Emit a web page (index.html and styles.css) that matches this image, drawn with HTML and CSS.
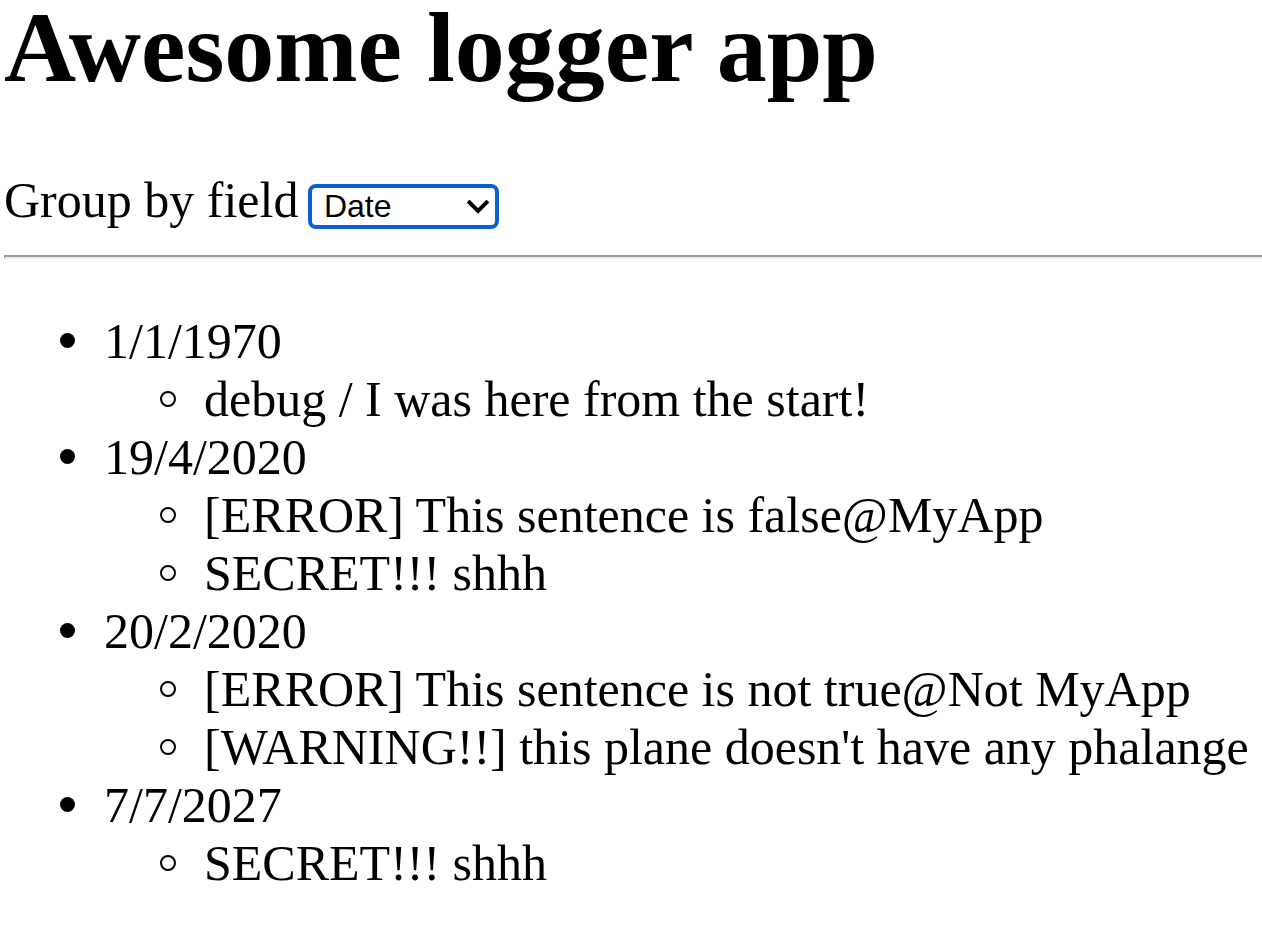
FILE: index.html
```html
<!DOCTYPE html>
<html lang="en">
<head>
<meta charset="utf-8">
<title>Awesome logger app</title>
<link rel="stylesheet" href="styles.css">
</head>
<body>
<h1 class="title">Awesome logger app</h1>
<div class="group-row">
  <label for="group" class="group-label">Group by field</label>
  <span class="select-wrap">
    <select id="group" class="group-select">
      <option>Date</option>
      <option>Level</option>
      <option>Source</option>
    </select>
    <svg class="chevron" width="22" height="14" viewBox="0 0 22 14" aria-hidden="true"><path d="M2.5 2.5 L11 11 L19.5 2.5" fill="none" stroke="#000" stroke-width="4" stroke-linecap="square" stroke-linejoin="miter"/></svg>
  </span>
</div>
<div class="rule"></div>
<ul class="groups">
  <li>1/1/1970
    <ul class="entries">
      <li>debug / I was here from the start!</li>
    </ul>
  </li>
  <li>19/4/2020
    <ul class="entries">
      <li>[ERROR] This sentence is false@MyApp</li>
      <li>SECRET!!! shhh</li>
    </ul>
  </li>
  <li>20/2/2020
    <ul class="entries">
      <li>[ERROR] This sentence is not true@Not MyApp</li>
      <li>[WARNING!!] this plane doesn't have any phalange</li>
    </ul>
  </li>
  <li>7/7/2027
    <ul class="entries">
      <li>SECRET!!! shhh</li>
    </ul>
  </li>
</ul>
</body>
</html>
```

FILE: styles.css
```css
html, body {
  margin: 0;
  padding: 0;
  background: #fff;
  overflow: hidden;
}

body {
  padding-left: 4px;
  font-family: "Liberation Serif", "Times New Roman", serif;
  font-size: 50px;
  line-height: 58px;
  color: #000;
}

.title {
  margin: 0;
  padding-top: 2px;
  font-size: 100px;
  font-weight: bold;
  line-height: 92px;
  white-space: nowrap;
}

.group-row {
  margin-top: 77px;
  height: 58px;
  line-height: 58px;
  white-space: nowrap;
}

.group-label {
  margin-right: -3px;
}

.select-wrap {
  position: relative;
  display: inline-flex;
  vertical-align: baseline;
}

.group-select {
  appearance: none;
  -webkit-appearance: none;
  box-sizing: border-box;
  width: 191px;
  height: 45px;
  margin: 0;
  padding: 0 0 0 12px;
  border: 4px solid #0a5fd2;
  border-radius: 8px;
  background: #fff;
  color: #000;
  font-family: "Liberation Sans", Arial, sans-serif;
  font-size: 32px;
  line-height: 37px;
  outline: none;
}

.chevron {
  position: absolute;
  right: 10px;
  top: 16px;
  pointer-events: none;
}

.rule {
  margin-top: 26px;
  margin-right: -40px;
  height: 0;
  border-top: 2px solid #999999;
  border-bottom: 2px solid #ececec;
  border-left: 1px solid #999999;
}

.groups {
  margin: 53px 0 0 0;
  padding-left: 100px;
  list-style: none;
}

.entries {
  margin: 0;
  padding-left: 100px;
  list-style: none;
}

li {
  position: relative;
  white-space: nowrap;
}

.groups > li::before {
  content: "";
  position: absolute;
  left: -44px;
  top: 21px;
  width: 15px;
  height: 15px;
  border-radius: 50%;
  background: #000;
}

.entries > li::before {
  content: "";
  position: absolute;
  left: -44px;
  top: 21px;
  box-sizing: border-box;
  width: 16px;
  height: 16px;
  border: 2px solid #000;
  border-radius: 50%;
  background: transparent;
}
```
